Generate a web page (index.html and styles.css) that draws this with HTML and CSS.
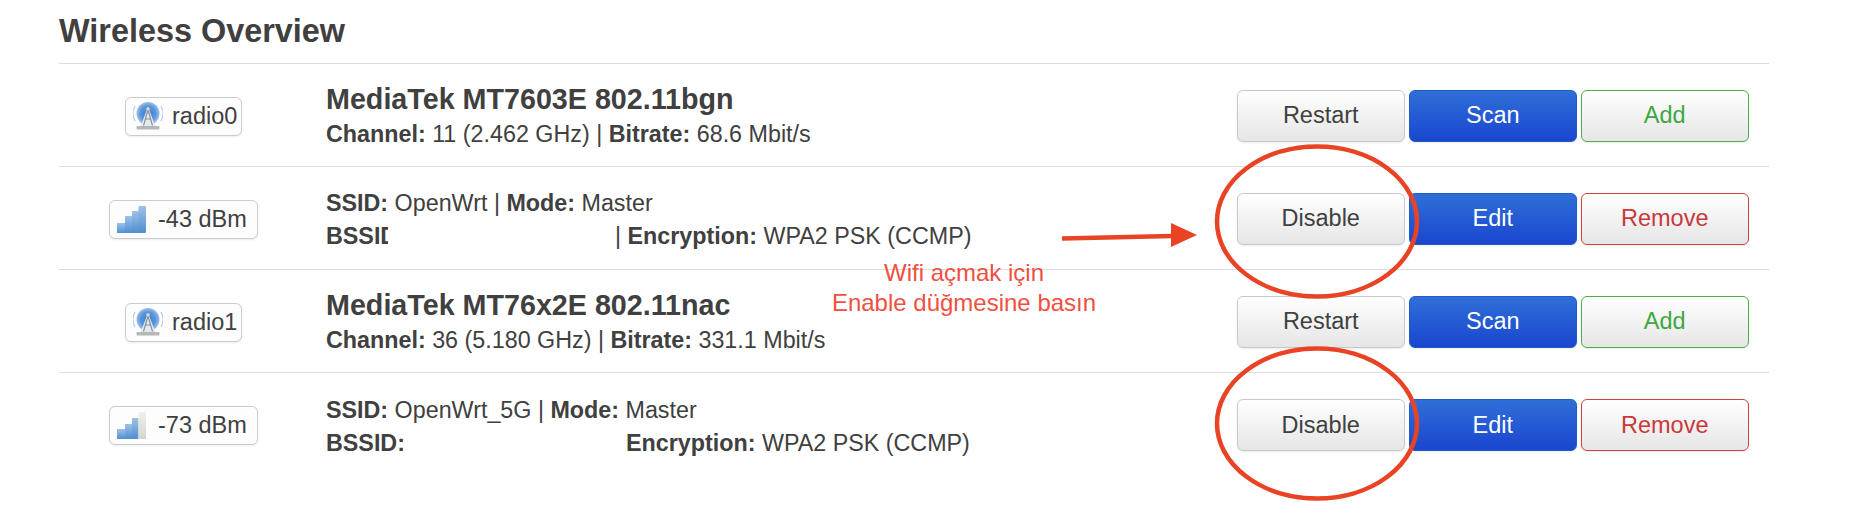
FILE: index.html
```html
<!DOCTYPE html>
<html lang="en">
<head>
<meta charset="utf-8">
<title>Wireless Overview</title>
<link rel="stylesheet" href="styles.css">
</head>
<body>
<svg width="0" height="0" class="defs">
  <defs>
    <linearGradient id="barBlue" x1="0" y1="0" x2="0" y2="1"><stop offset="0" stop-color="#9fc1e8"/><stop offset="1" stop-color="#4f8fd0"/></linearGradient>
    <linearGradient id="barGrey" x1="0" y1="0" x2="0" y2="1"><stop offset="0" stop-color="#f1f1ec"/><stop offset="1" stop-color="#d4d5cf"/></linearGradient>
    <radialGradient id="radioBlue"><stop offset="0" stop-color="#3f7fd0"/><stop offset="0.65" stop-color="#5a95dc"/><stop offset="1" stop-color="#9cc0ea"/></radialGradient>
    <filter id="soft"><feGaussianBlur stdDeviation="0.4"/></filter>
    <symbol id="radio" viewBox="0 0 30 30">
      <g filter="url(#soft)">
        <circle cx="15" cy="12.500" r="11.500" fill="url(#radioBlue)"/>
        <path d="M2 5A15 15 0 0 0 2 20M28 5A15 15 0 0 1 28 20" fill="none" stroke="#b3cfee" stroke-width="1.300"/>
        <path d="M15 6L7.500 25.500H22.500Z" fill="#e6eaee"/>
        <path d="M15 9L10.500 24.500M15 9L19.500 24.500M12.500 18H17.500" fill="none" stroke="#808c98" stroke-width="1.100"/>
        <circle cx="15" cy="8" r="2.200" fill="#cfd9e4" stroke="#7a8a9c" stroke-width=".7"/>
        <rect x="3.500" y="25" width="23" height="3.500" rx="1" fill="#b5b8b4"/>
      </g>
    </symbol>
  </defs>
</svg>
<main class="page">
  <h2 class="title">Wireless Overview</h2>
  <div class="table">
    <div class="row">
      <div class="c-badge"><span class="badge badge-radio"><svg class="ico-radio"><use href="#radio"/></svg>radio0</span></div>
      <div class="c-info">
        <div class="dev">MediaTek MT7603E 802.11bgn</div>
        <div class="line"><b>Channel:</b> 11 (2.462 GHz) | <b>Bitrate:</b> 68.6 Mbit/s</div>
      </div>
      <div class="c-btns"><button class="btn">Restart</button><button class="btn blue">Scan</button><button class="btn add">Add</button></div>
    </div>
    <div class="row">
      <div class="c-badge"><span class="badge badge-signal"><svg class="ico-bars" viewBox="0 0 29 27"><g filter="url(#soft)"><rect x="0" y="17" width="8.500" height="10" fill="url(#barBlue)"/><rect x="8" y="10" width="7.500" height="17" fill="url(#barBlue)"/><rect x="15" y="5" width="7" height="22" fill="url(#barBlue)"/><rect x="21.500" y="0" width="7.500" height="27" rx="1" fill="url(#barBlue)"/></g></svg>-43 dBm</span></div>
      <div class="c-info">
        <div class="line"><b>SSID:</b> OpenWrt | <b>Mode:</b> Master</div>
        <div class="line"><span class="cut"><b>BSSID:</b></span><span class="sep">|</span> <b>Encryption:</b> WPA2 PSK (CCMP)</div>
      </div>
      <div class="c-btns"><button class="btn">Disable</button><button class="btn blue">Edit</button><button class="btn del">Remove</button></div>
    </div>
    <div class="row">
      <div class="c-badge"><span class="badge badge-radio"><svg class="ico-radio"><use href="#radio"/></svg>radio1</span></div>
      <div class="c-info">
        <div class="dev">MediaTek MT76x2E 802.11nac</div>
        <div class="line"><b>Channel:</b> 36 (5.180 GHz) | <b>Bitrate:</b> 331.1 Mbit/s</div>
      </div>
      <div class="c-btns"><button class="btn">Restart</button><button class="btn blue">Scan</button><button class="btn add">Add</button></div>
    </div>
    <div class="row last">
      <div class="c-badge"><span class="badge badge-signal"><svg class="ico-bars" viewBox="0 0 29 27"><g filter="url(#soft)"><rect x="0" y="17" width="8.500" height="10" fill="url(#barBlue)"/><rect x="8" y="12" width="7.500" height="15" fill="url(#barBlue)"/><rect x="15" y="6" width="6.500" height="21" fill="url(#barBlue)"/><rect x="21.500" y="0" width="7.500" height="27" rx="1" fill="url(#barGrey)"/></g></svg>-73 dBm</span></div>
      <div class="c-info">
        <div class="line"><b>SSID:</b> OpenWrt_5G | <b>Mode:</b> Master</div>
        <div class="line"><span class="blank"><b>BSSID:</b></span><b>Encryption:</b> WPA2 PSK (CCMP)</div>
      </div>
      <div class="c-btns"><button class="btn">Disable</button><button class="btn blue">Edit</button><button class="btn del">Remove</button></div>
    </div>
  </div>
</main>
<div class="note">Wifi açmak için<br>Enable düğmesine basın</div>
<svg class="marks" viewBox="0 0 1868 514" width="1868" height="514">
  <path class="stroke" d="M1062 238.500L1172 236"/>
  <path class="head" d="M1171 223L1197 235L1171 247Z"/>
  <ellipse class="stroke" cx="1317" cy="221.500" rx="100" ry="75"/>
  <ellipse class="stroke" cx="1317" cy="423.500" rx="100" ry="75"/>
</svg>
</body>
</html>
```
FILE: styles.css
```css
* { box-sizing: border-box; }
html, body { margin: 0; padding: 0; background: #fff; }
body {
  width: 1868px;
  height: 514px;
  overflow: hidden;
  position: relative;
  font-family: "Liberation Sans", Arial, sans-serif;
  color: #404040;
}
.defs { position: absolute; }
.page { padding: 0 0 0 59px; width: 1769px; }
.title {
  margin: 0;
  height: 63px;
  padding-top: 12px;
  font-size: 32.400px;
  line-height: 38px;
  font-weight: 700;
  color: #404040;
}
.row {
  display: flex;
  align-items: center;
  height: 103px;
  border-top: 1px solid #ddd;
}
.row.last { height: 104px; }
.c-badge { width: 267px; display: flex; justify-content: center; padding: 2px 18px 0 0; }
.badge {
  display: inline-flex;
  align-items: center;
  height: 39px;
  border: 1px solid #ccc;
  border-radius: 6px;
  background: #fdfdfd;
  box-shadow: 0 1px 2px rgba(0,0,0,.08);
  font-size: 23.500px;
  white-space: nowrap;
}
.badge-radio { width: 117px; padding-left: 7px; }
.badge-signal { width: 149px; padding-left: 7px; }
.ico-radio { width: 30px; height: 30px; margin-right: 9px; flex: none; }
.ico-bars { width: 29px; height: 27px; margin-right: 12px; flex: none; }
.c-info { flex: 1; padding-top: 4px; font-size: 23.300px; line-height: 33px; }
.dev { margin: -2px 0 2px; font-size: 28.700px; font-weight: 700; line-height: 34px; }
.line { white-space: nowrap; }
.cut { display: inline-block; width: 62px; overflow: hidden; vertical-align: bottom; height: 33px; }
.sep { display: inline-block; margin-left: 227px; }
.blank { display: inline-block; width: 300px; }
.c-btns { display: flex; gap: 3.500px; padding: 1px 20px 0 0; }
.btn {
  width: 168.500px;
  height: 52px;
  padding: 0;
  border: 1px solid #c8c8c8;
  border-radius: 6px;
  background: linear-gradient(#fff, #e6e6e6);
  box-shadow: 0 1px 2px rgba(0,0,0,.08);
  font: 23.500px "Liberation Sans", Arial, sans-serif;
  color: #404040;
}
.btn.blue {
  border-color: #1f5cc4;
  background: linear-gradient(#2f6fd8, #1a46cf);
  color: #fff;
}
.btn.add { border-color: #4cae4c; color: #3fa73f; }
.btn.del { border-color: #d43f3a; color: #c9393a; }
.note {
  position: absolute;
  left: 814px;
  top: 258px;
  width: 300px;
  text-align: center;
  white-space: nowrap;
  font-size: 24px;
  line-height: 30px;
  color: #f0503f;
}
.marks { position: absolute; left: 0; top: 0; pointer-events: none; }
.stroke { fill: none; stroke: #e94325; stroke-width: 4.500px; }
.head { fill: #e94325; }
```
